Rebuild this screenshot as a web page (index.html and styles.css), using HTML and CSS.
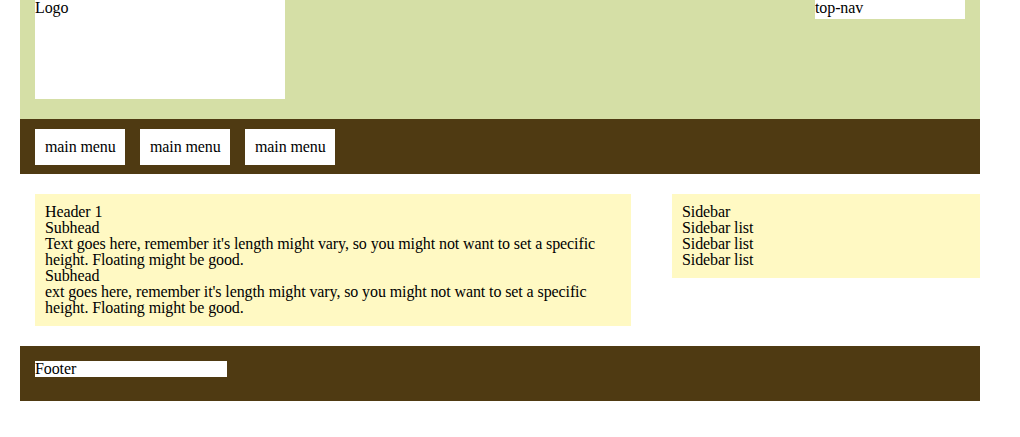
FILE: index.html
```html
<!DOCTYPE html>
<html>
<head>
<meta charset="utf-8">
<link rel="stylesheet" href="styles.css">
</head>
<body>
<div class="page">
  <header class="header">
    <div class="logo">Logo</div>
    <div class="top-nav">top-nav</div>
  </header>
  <nav class="main-nav">
    <div class="menu-item">main menu</div>
    <div class="menu-item">main menu</div>
    <div class="menu-item">main menu</div>
  </nav>
  <div class="content">
    <main class="main">
      <div>Header 1</div>
      <div>Subhead</div>
      <p>Text goes here, remember it's length might vary, so you might not want to set a specific height. Floating might be good.</p>
      <div>Subhead</div>
      <p>ext goes here, remember it's length might vary, so you might not want to set a specific height. Floating might be good.</p>
    </main>
    <aside class="sidebar">
      <div>Sidebar</div>
      <div>Sidebar list</div>
      <div>Sidebar list</div>
      <div>Sidebar list</div>
    </aside>
  </div>
  <footer class="footer">
    <div class="footer-box">Footer</div>
  </footer>
</div>
</body>
</html>
```
FILE: styles.css
```css
body {
  margin: 0;
  font-family: "Liberation Serif", "Times New Roman", serif;
  font-size: 16px;
  line-height: 16px;
  letter-spacing: -0.1px;
  color: #000;
  background: #fff;
}
.page {
  width: 960px;
  margin-left: 20px;
}
.header {
  height: 119px;
  background: #d5dfa6;
  padding: 0 15px;
  box-sizing: border-box;
  display: flex;
  justify-content: space-between;
  align-items: flex-start;
}
.logo {
  width: 250px;
  height: 99px;
  background: #fff;
}
.top-nav {
  width: 150px;
  height: 19px;
  background: #fff;
}
.main-nav {
  height: 55px;
  box-sizing: border-box;
  background: #4f3a12;
  padding: 10px 15px 0;
  display: flex;
  gap: 15px;
  align-items: flex-start;
}
.menu-item {
  width: 90px;
  box-sizing: border-box;
  padding: 10px;
  background: #fff;
  white-space: nowrap;
}
.content {
  margin: 20px 0;
  padding-left: 15px;
  display: flex;
  justify-content: space-between;
  align-items: flex-start;
}
.main {
  width: 596px;
  box-sizing: border-box;
  padding: 10px;
  background: #fff9c3;
}
.main p {
  margin: 0;
}
.sidebar {
  width: 308px;
  box-sizing: border-box;
  padding: 10px;
  background: #fff9c3;
}
.footer {
  height: 55px;
  box-sizing: border-box;
  background: #4f3a12;
  padding: 15px 15px 0;
}
.footer-box {
  width: 192px;
  height: 16px;
  background: #fff;
}
```
